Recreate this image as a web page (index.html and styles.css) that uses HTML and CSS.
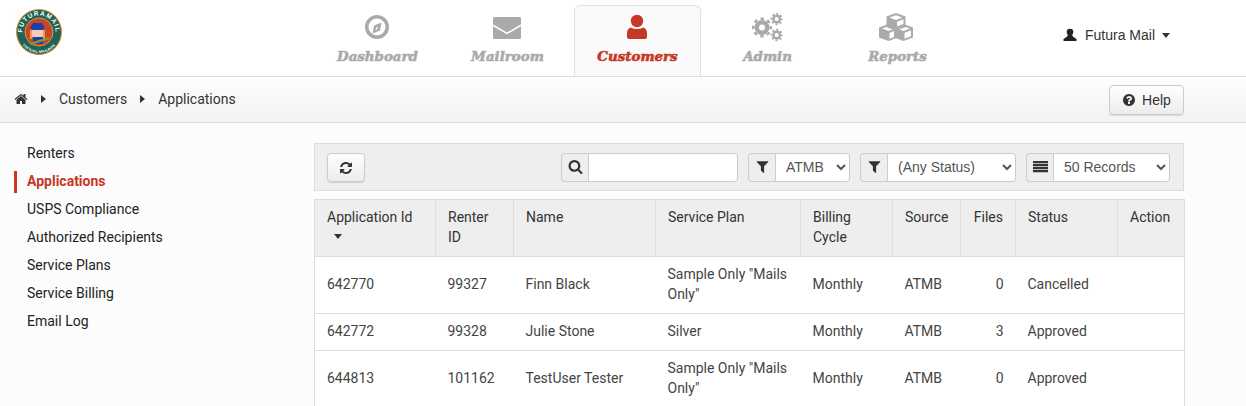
FILE: index.html
```html
<!DOCTYPE html>
<html lang="en">
<head>
<meta charset="utf-8">
<title>Applications</title>
<link rel="stylesheet" href="styles.css">
</head>
<body>
<header class="top">
  <a class="logo">
    <svg viewBox="0 0 48 48" width="48" height="48">
      <rect width="48" height="48" fill="#fffdf5"/>
      <circle cx="24" cy="24" r="22.500" fill="#1c6455" stroke="#e08a3c" stroke-width="1"/>
      <circle cx="24" cy="24" r="14" fill="#c8452b" stroke="#e9903a" stroke-width="1"/>
      <path d="M15 22h2v9h-2zM28 22h2v9h-2z" fill="#e9a04a"/>
      <rect x="17" y="21" width="11" height="9" rx="2" fill="#f7c9b8"/>
      <path d="M15 20l3-5h9l3 5-3 2H18z" fill="#1d3fa8"/>
      <rect x="18" y="29" width="10" height="7" fill="#1d3fa8"/>
      <path d="M14 35l20-6 1 2-19 6z" fill="#7e9a2c"/>
      <defs>
        <path id="arc-top" d="M24 40.500a16.500 16.500 0 1 1 0-33a16.500 16.500 0 1 1 0 33"/>
        <path id="arc-bottom" d="M24 3a21 21 0 0 0 0 42a21 21 0 0 0 0-42"/>
      </defs>
      <text class="logo-top"><textPath href="#arc-top" startOffset="50%" text-anchor="middle">FUTURAMAIL</textPath></text>
      <text class="logo-bottom"><textPath href="#arc-bottom" startOffset="50%" text-anchor="middle">VIRTUAL MAILBOX</textPath></text>
    </svg>
  </a>
  <nav class="tabs">
    <a class="tab">
      <svg class="tab-icon" viewBox="0 0 41 30"><path fill-rule="evenodd" d="M20 2a12 12 0 1 0 0 24a12 12 0 0 0 0-24zm0 3.500a8.500 8.500 0 1 1 0 17a8.500 8.500 0 0 1 0-17z"/><path fill-rule="evenodd" d="M24.500 9.500L23 17.500 15.500 20.500 17 12.500zM20.800 13.500l-1.800 1.200-.5 2.500 1.800-1.200z"/></svg>
      <span>Dashboard</span>
    </a>
    <a class="tab">
      <svg class="tab-icon" viewBox="0 0 41 30"><rect x="6" y="4" width="28" height="22" rx="1.500"/><path class="cut" d="M5.500 12L20 20.500 34.500 12"/></svg>
      <span>Mailroom</span>
    </a>
    <a class="tab active">
      <svg class="tab-icon" viewBox="0 0 41 30"><circle cx="20" cy="8" r="6.200"/><path d="M13.500 14.500q6.500 3 13 0c2.500 1 3.500 3 3.500 6v3.500a2 2 0 0 1-2 2H12a2 2 0 0 1-2-2v-3.500c0-3 1-5 3.500-6z"/></svg>
      <span>Customers</span>
    </a>
    <a class="tab">
      <svg class="tab-icon gears" viewBox="0 0 41 30">
        <circle cx="15" cy="14.500" r="5.250" stroke-width="4.500"/>
        <circle cx="15" cy="14.500" r="8.750" stroke-width="2.500" stroke-dasharray="3.440 3.430" stroke-dashoffset="1.720"/>
        <circle cx="29.700" cy="6" r="3.300" stroke-width="2.400"/>
        <circle cx="29.700" cy="6" r="5.250" stroke-width="1.800" stroke-dasharray="2.060 2.060" stroke-dashoffset="1.030"/>
        <circle cx="29.700" cy="22" r="3.300" stroke-width="2.400"/>
        <circle cx="29.700" cy="22" r="5.250" stroke-width="1.800" stroke-dasharray="2.060 2.060" stroke-dashoffset="1.030"/>
      </svg>
      <span>Admin</span>
    </a>
    <a class="tab">
      <svg class="tab-icon" viewBox="0 0 41 30">
        <path fill-rule="evenodd" d="M19 0l9.500 3.500v10.500L19 18l-9.500-4V3.500zM12.500 4.500L19 7l6.500-2.500L19 2.200zM20 8.700v7l6.500-2.700V6.300z"/>
        <path fill-rule="evenodd" d="M11.500 11l9.500 3.500v10L11.500 28 2 24.500v-10zM5 15.500L11.500 18 18 15.500l-6.500-2.300zM12.500 19.700v6l6.500-2.500v-6z"/>
        <path fill-rule="evenodd" d="M26.500 11l9.500 3.500v10L26.500 28 17 24.500v-10zM20 15.500l6.500 2.500 6.500-2.500-6.500-2.300zM27.500 19.700v6l6.500-2.500v-6z"/>
      </svg>
      <span>Reports</span>
    </a>
  </nav>
  <a class="user">
    <svg class="user-icon" viewBox="0 0 14 14" width="14" height="14"><circle cx="7" cy="4" r="3.300"/><path d="M4.800 6.800h4.400l.6 1.800L13.500 11v2H.5v-2l3.700-2.400z"/></svg>
    <span>Futura Mail</span>
    <i class="caret"></i>
  </a>
</header>

<div class="crumbs">
  <ol class="trail">
    <li><svg class="fa" viewBox="0 0 1792 1792" width="14" height="14"><path d="M1472 992v480q0 26-19 45t-45 19h-384v-384h-256v384h-384q-26 0-45-19t-19-45v-480q0-1 .5-3t.5-3l575-474 575 474q1 2 1 6zm223-69l-62 74q-8 9-21 11h-3q-13 0-21-7l-692-577-692 577q-12 8-24 7-13-2-21-11l-62-74q-8-10-7-23.500t11-21.500l719-599q32-26 76-26t76 26l244 204v-195q0-14 9-23t23-9h192q14 0 23 9t9 23v408l219 182q10 8 11 21.500t-7 23.500z"/></svg></li>
    <li class="sep"></li>
    <li>Customers</li>
    <li class="sep"></li>
    <li>Applications</li>
  </ol>
  <button class="btn help" type="button">
    <svg class="fa" viewBox="0 0 1792 1792" width="14" height="14"><path d="M1024 1376v-192q0-14-9-23t-23-9h-192q-14 0-23 9t-9 23v192q0 14 9 23t23 9h192q14 0 23-9t9-23zm256-672q0-88-55.500-163t-138.500-116-170-41q-243 0-371 213-15 24 8 42l132 100q7 6 19 6 16 0 25-12 53-68 86-92 34-24 86-24 48 0 85.500 26t37.500 59q0 38-20 61t-68 45q-63 28-115.500 86.500t-52.500 125.500v36q0 14 9 23t23 9h192q14 0 23-9t9-23q0-19 21.500-49.500t54.500-49.500q32-18 49-28.500t46-35 44.500-48 28-60.500 12.500-81zm384 192q0 209-103 385.500t-279.500 279.500-385.500 103-385.500-103-279.500-279.500-103-385.500 103-385.500 279.500-279.500 385.500-103 385.500 103 279.500 279.500 103 385.500z"/></svg>
    Help
  </button>
</div>

<div class="page">
  <ul class="side">
    <li>Renters</li>
    <li class="current">Applications</li>
    <li>USPS Compliance</li>
    <li>Authorized Recipients</li>
    <li>Service Plans</li>
    <li>Service Billing</li>
    <li>Email Log</li>
  </ul>
  <main class="main">
    <div class="toolbar">
      <button class="btn refresh" type="button" aria-label="Refresh">
        <svg class="fa" viewBox="0 0 1792 1792" width="14" height="14"><path d="M1639 1056q0 5-1 7-64 268-268 434.500t-478 166.500q-146 0-282.500-55t-243.500-157l-129 129q-19 19-45 19t-45-19-19-45v-448q0-26 19-45t45-19h448q26 0 45 19t19 45-19 45l-137 137q71 66 161 102t187 36q134 0 250-65t186-179q11-17 53-117 8-23 30-23h192q13 0 22.500 9.500t9.500 22.500zm25-800v448q0 26-19 45t-45 19h-448q-26 0-45-19t-19-45 19-45l138-138q-148-137-349-137-134 0-250 65t-186 179q-11 17-53 117-8 23-30 23h-199q-13 0-22.500-9.500t-9.500-22.500v-7q65-268 270-434.500t480-166.500q146 0 284 55.500t245 156.500l130-129q19-19 45-19t45 19 19 45z"/></svg>
      </button>
      <div class="spacer"></div>
      <div class="group search">
        <span class="addon"><svg class="fa" viewBox="0 0 1792 1792" width="15" height="15"><path d="M1216 832q0-185-131.500-316.500t-316.500-131.500-316.500 131.500-131.500 316.500 131.500 316.500 316.500 131.500 316.500-131.500 131.500-316.500zm512 832q0 52-38 90t-90 38q-54 0-90-38l-343-342q-179 124-399 124-143 0-273.500-55.500t-225-150-150-225-55.500-273.500 55.500-273.500 150-225 225-150 273.500-55.500 273.500 55.500 225 150 150 225 55.500 273.500q0 220-124 399l343 343q37 37 37 90z"/></svg></span>
        <input class="field" type="text" aria-label="Search">
      </div>
      <div class="group source">
        <span class="addon"><svg class="fa" viewBox="0 0 1792 1792" width="15" height="15"><path d="M1595 295q17 41-14 70l-493 493v742q0 42-39 59-13 5-25 5-27 0-45-19l-256-256q-19-19-19-45v-486l-493-493q-31-29-14-70 17-39 59-39h1280q42 0 59 39z"/></svg></span>
        <select class="field"><option>ATMB</option></select>
      </div>
      <div class="group status">
        <span class="addon"><svg class="fa" viewBox="0 0 1792 1792" width="15" height="15"><path d="M1595 295q17 41-14 70l-493 493v742q0 42-39 59-13 5-25 5-27 0-45-19l-256-256q-19-19-19-45v-486l-493-493q-31-29-14-70 17-39 59-39h1280q42 0 59 39z"/></svg></span>
        <select class="field"><option>(Any Status)</option></select>
      </div>
      <div class="group records">
        <span class="addon"><svg class="fa" viewBox="0 0 15 12" width="15" height="12"><path d="M0 0h15v2.200H0zM0 3h15v2.200H0zM0 6h15v2.200H0zM0 9h15v2.200H0z"/></svg></span>
        <select class="field"><option>50 Records</option></select>
      </div>
    </div>
    <table class="grid">
      <colgroup>
        <col class="c-app"><col class="c-renter"><col class="c-name"><col class="c-plan"><col class="c-cycle"><col class="c-source"><col class="c-files"><col class="c-status"><col class="c-action">
      </colgroup>
      <thead>
        <tr>
          <th>Application Id<br><i class="caret sort"></i></th>
          <th>Renter ID</th>
          <th>Name</th>
          <th>Service Plan</th>
          <th>Billing Cycle</th>
          <th>Source</th>
          <th class="num">Files</th>
          <th>Status</th>
          <th>Action</th>
        </tr>
      </thead>
      <tbody>
        <tr><td>642770</td><td>99327</td><td>Finn Black</td><td>Sample Only "Mails Only"</td><td>Monthly</td><td>ATMB</td><td class="num">0</td><td>Cancelled</td><td></td></tr>
        <tr><td>642772</td><td>99328</td><td>Julie Stone</td><td>Silver</td><td>Monthly</td><td>ATMB</td><td class="num">3</td><td>Approved</td><td></td></tr>
        <tr><td>644813</td><td>101162</td><td>TestUser Tester</td><td>Sample Only "Mails Only"</td><td>Monthly</td><td>ATMB</td><td class="num">0</td><td>Approved</td><td></td></tr>
      </tbody>
    </table>
  </main>
</div>
</body>
</html>
```

FILE: styles.css
```css
* { box-sizing: border-box; }
html, body { margin: 0; height: 406px; overflow: hidden; }
body {
  background: #fcfcfc;
  color: #333;
  font: 14px/20px Roboto, sans-serif;
}

.top {
  display: flex;
  height: 77px;
  background: #fff;
  border-bottom: 1px solid #ddd;
}
.logo { display: block; width: 48px; height: 48px; margin: 8px 0 0 15px; }
.logo svg { display: block; }
.logo-top { font: bold 6.500px "Liberation Sans", sans-serif; fill: #fff; letter-spacing: 1px; }
.logo-bottom { font: bold 3.600px "Liberation Sans", sans-serif; fill: #fff; letter-spacing: .3px; }

.tabs { display: flex; margin-left: 251px; padding-top: 5px; }
.tab {
  display: flex;
  flex-direction: column;
  align-items: center;
  width: 127px;
  height: 71px;
  margin-right: 3px;
  border: 1px solid transparent;
  border-bottom: 0;
  border-radius: 6px 6px 0 0;
  color: #aaa;
  font: italic bold 13.400px/16px "DejaVu Serif", serif;
  -webkit-text-stroke: .6px currentColor;
}
.tab.active {
  background: #fafafa;
  border-color: #e2e2e2;
  color: #c63726;
}
.tab-icon { display: block; width: 41px; height: 30px; margin-top: 7px; fill: currentColor; }
.tab span { margin-top: 5px; }
.cut { fill: none; stroke: #fff; stroke-width: 1.500; }
.gears circle { fill: none; stroke: currentColor; }

.user {
  display: flex;
  align-items: center;
  height: 70px;
  margin-left: 99px;
  color: #333;
  font: 14px "Liberation Sans", sans-serif;
}
.user-icon { fill: #222; margin-right: 8px; }
.caret {
  display: inline-block;
  width: 0;
  height: 0;
  margin-left: 7px;
  border: 4.500px solid transparent;
  border-top: 5px solid #333;
  border-bottom: 0;
}

.crumbs {
  display: flex;
  align-items: center;
  justify-content: space-between;
  height: 46px;
  padding: 0 62px 0 14px;
  background: linear-gradient(#fdfdfd, #f3f3f3);
  border-bottom: 1px solid #ddd;
}
.trail { display: flex; align-items: center; margin: 0 0 2px; padding: 0; list-style: none; }
.trail li { display: flex; }
.trail .sep {
  width: 0;
  height: 0;
  margin: 0 13px;
  border: 4px solid transparent;
  border-left: 5px solid #333;
  border-right: 0;
}
.fa { display: block; fill: #333; }

.btn {
  display: flex;
  align-items: center;
  justify-content: center;
  border: 1px solid #ccc;
  border-radius: 4px;
  background: linear-gradient(#fff, #ececec);
  box-shadow: 0 1px 1px rgba(0, 0, 0, .12);
  color: #333;
  font: 14px/20px "Liberation Sans", sans-serif;
}
.help { gap: 6px; width: 75px; height: 30px; padding: 0; }
.refresh { width: 38px; height: 29px; padding: 0; }

.page { display: flex; padding-top: 20px; }
.side { width: 300px; margin: 0 0 0 14px; padding: 0; list-style: none; color: #222; }
.side li {
  height: 22px;
  margin-bottom: 6px;
  padding-left: 10px;
  border-left: 3px solid transparent;
  line-height: 20px;
}
.side li.current { border-left-color: #c63726; color: #c63726; font-weight: 700; }

.main { width: 870px; }
.toolbar {
  display: flex;
  gap: 10px;
  height: 48px;
  padding: 9px 13px 0 12px;
  background: #eee;
  border: 1px solid #ddd;
}
.spacer { flex: 1; }
.group { display: flex; height: 29px; }
.addon {
  display: flex;
  align-items: center;
  justify-content: center;
  width: 27px;
  padding-bottom: 2px;
  background: #eee;
  border: 1px solid #ccc;
  border-right: 0;
  border-radius: 4px 0 0 4px;
}
.field {
  flex: 1;
  min-width: 0;
  height: 29px;
  padding: 0 6px 2px;
  background: #fff;
  border: 1px solid #ccc;
  border-radius: 0 4px 4px 0;
  color: #555;
  font: 14px "Liberation Sans", sans-serif;
}
.search { width: 177px; }
.source { width: 102px; }
.status { width: 156px; }
.records { width: 144px; }

.grid {
  width: 870px;
  margin-top: 8px;
  border-collapse: collapse;
  table-layout: fixed;
  background: #fff;
  border: 1px solid #ddd;
}
.c-app { width: 121px; }
.c-renter { width: 78px; }
.c-name { width: 142px; }
.c-plan { width: 145px; }
.c-cycle { width: 92px; }
.c-source { width: 68px; }
.c-files { width: 55px; }
.c-status { width: 102px; }
.c-action { width: 67px; }
th, td { padding: 7px 12px 9px; text-align: left; vertical-align: top; }
th {
  background: #eee;
  border: 1px solid #ddd;
  font-weight: 400;
  color: #333;
}
td { vertical-align: middle; border-top: 1px solid #ddd; color: #444; }
th.num, td.num { text-align: right; }
.sort { margin: 0 0 3px 7px; }
```
